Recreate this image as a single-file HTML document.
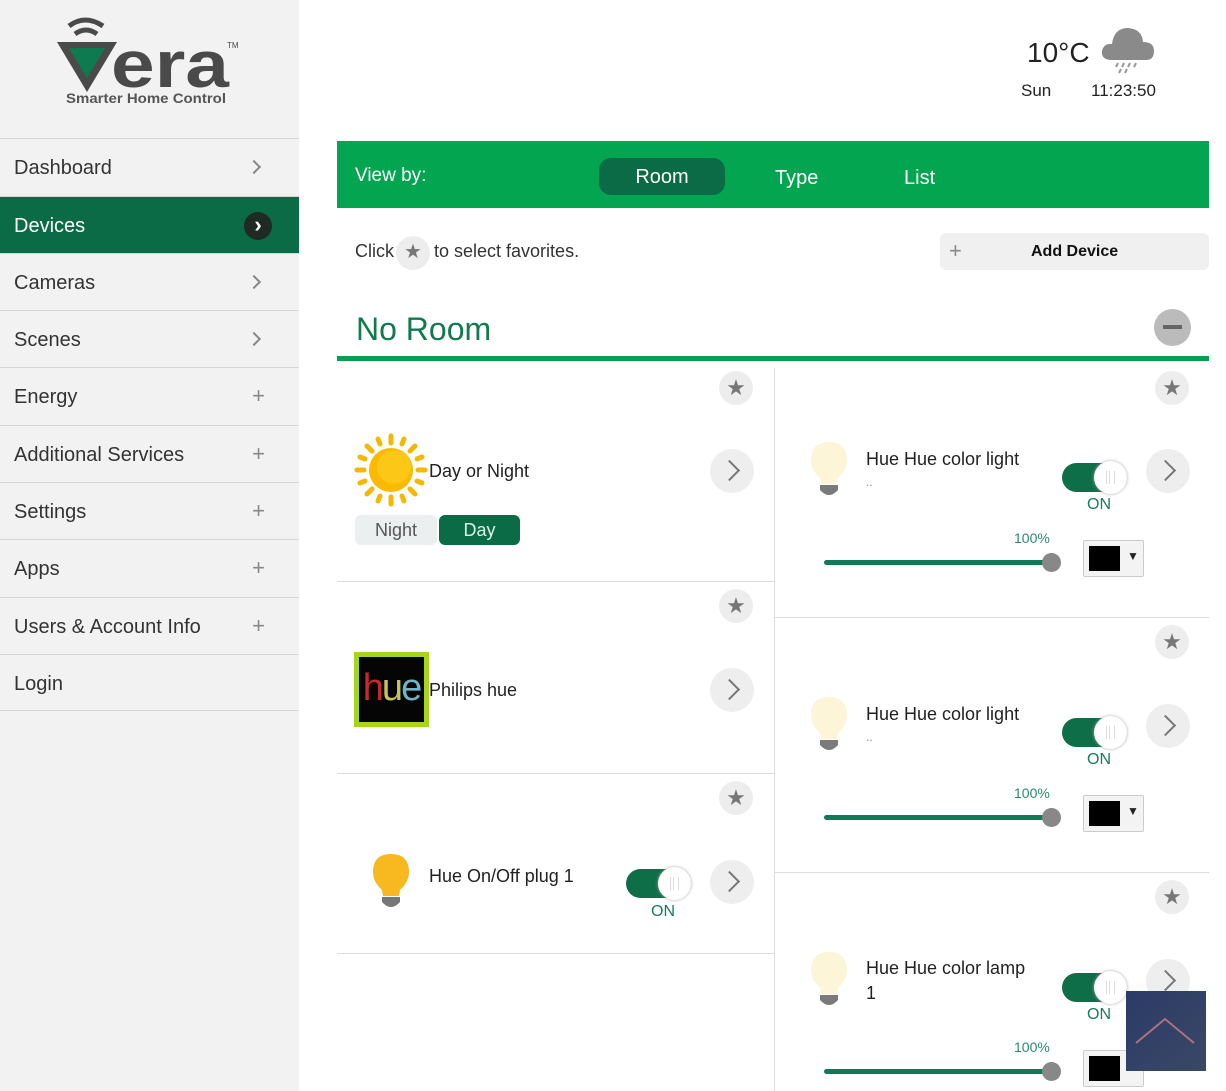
<!DOCTYPE html>
<html><head><meta charset="utf-8"><style>
*{box-sizing:border-box;margin:0;padding:0}
body{width:1226px;height:1091px;overflow:hidden;background:#fff;font-family:"Liberation Sans",sans-serif;color:#222;position:relative}
.a{position:absolute}
#side{left:0;top:0;width:299px;height:1091px;background:#f2f2f2}
.nav{position:absolute;left:0;width:299px;height:57px;border-top:1px solid #d6d6d6;font-size:20px;color:#333;padding:18px 14px 0}
.nav .ic{position:absolute;right:34px;top:15px;color:#888;font-size:22px}
.nav .ch{position:absolute;right:40px;top:23px;width:10px;height:10px;border-top:2px solid #888;border-right:2px solid #888;transform:rotate(45deg)}
.sel{background:#0b6b46;color:#fff}
.star{position:absolute;width:34px;height:34px;border-radius:50%;background:#ededed;color:#777;font-size:22px;text-align:center;line-height:33px}
.arr{position:absolute;width:44px;height:44px;border-radius:50%;background:#eee}
.arr:after{content:"";position:absolute;left:12px;top:14px;width:13px;height:13px;border-top:2px solid #777;border-right:2px solid #777;transform:rotate(45deg)}
.tg{position:absolute;width:65px;height:29px;border-radius:15px;background:#0e6e47}
.tg:after{content:"";position:absolute;right:0;top:-2px;width:33px;height:33px;border-radius:50%;background:#fff;box-shadow:0 0 3px #aaa}
.tg:before{content:"";position:absolute;right:12px;top:8px;width:7px;height:13px;border-left:1px solid #ddd;border-right:1px solid #ddd;z-index:2;background:linear-gradient(90deg,transparent 2px,#ddd 2px,#ddd 3px,transparent 3px)}
.on{position:absolute;font-size:16px;color:#1a7a5c}
.sl{position:absolute;height:5px;width:228px;background:#0f7a55;border-radius:3px}
.sl:after{content:"";position:absolute;right:-9px;top:-7px;width:19px;height:19px;border-radius:50%;background:#888}
.pc{position:absolute;font-size:14px;color:#2a8a70}
.cs{position:absolute;width:61px;height:37px;border:1px solid #ccc;background:#f3f3f3;border-radius:2px}
.cs:before{content:"";position:absolute;left:5px;top:5px;width:31px;height:25px;background:#000}
.cs:after{content:"▼";position:absolute;left:43px;top:8px;font-size:12px;color:#222}
.t{position:absolute;font-size:18px;color:#222}
.hl{position:absolute;height:1px;background:#ddd}
</style></head><body>
<div id="side" class="a">
 <svg class="a" style="left:55px;top:12px" width="190" height="95" viewBox="0 0 190 95">
  <path d="M14 14 Q30 2 48 14" stroke="#4a4a4a" stroke-width="5" fill="none"/>
  <path d="M20 22 Q31 14 42 22" stroke="#4a4a4a" stroke-width="5" fill="none"/>
  <polygon points="2,30 62,30 32,80" fill="#4a4a4a"/>
  <polygon points="14,36 50,36 32,66" fill="#0e7a50"/>
  <text x="56" y="75" font-size="66" font-weight="bold" fill="#4a4a4a" font-family="Liberation Sans" textLength="118" lengthAdjust="spacingAndGlyphs">era</text>
  <text x="172" y="36" font-size="8" fill="#4a4a4a">TM</text>
  <text x="11" y="91" font-size="14" font-weight="bold" fill="#555" font-family="Liberation Sans" textLength="160" lengthAdjust="spacingAndGlyphs">Smarter Home Control</text>
 </svg>
 <div class="nav" style="top:138px">Dashboard<span class="ch"></span></div>
 <div class="nav sel" style="top:196px">Devices<span style="position:absolute;right:27px;top:15px;width:28px;height:28px;border-radius:50%;background:#1f2a25;color:#fff;text-align:center;line-height:26px;font-size:22px;font-weight:bold">›</span></div>
 <div class="nav" style="top:253px">Cameras<span class="ch"></span></div>
 <div class="nav" style="top:310px">Scenes<span class="ch"></span></div>
 <div class="nav" style="top:367px">Energy<span class="ic">+</span></div>
 <div class="nav" style="top:425px">Additional Services<span class="ic">+</span></div>
 <div class="nav" style="top:482px">Settings<span class="ic">+</span></div>
 <div class="nav" style="top:539px">Apps<span class="ic">+</span></div>
 <div class="nav" style="top:597px">Users &amp; Account Info<span class="ic">+</span></div>
 <div class="nav" style="top:654px;border-bottom:1px solid #d6d6d6">Login</div>
</div>

<div class="a" style="left:1027px;top:37px;font-size:28px;color:#222">10°C</div>
<svg class="a" style="left:1100px;top:26px" width="56" height="48" viewBox="0 0 56 48"><path d="M10 34 Q1 33 2 25 Q4 17 12 18 Q14 2 28 2 Q42 3 43 16 Q54 16 54 25 Q54 34 46 34 Z" fill="#8a8a8a"/><g stroke="#999" stroke-width="2"><line x1="18" y1="37" x2="16" y2="41"/><line x1="24" y1="37" x2="22" y2="41"/><line x1="30" y1="37" x2="28" y2="41"/><line x1="36" y1="37" x2="34" y2="41"/><line x1="21" y1="43" x2="19" y2="47"/><line x1="27" y1="43" x2="25" y2="47"/></g></svg>
<div class="a" style="left:1021px;top:81px;font-size:17px">Sun</div>
<div class="a" style="left:1091px;top:81px;font-size:17px">11:23:50</div>

<div class="a" style="left:337px;top:141px;width:872px;height:67px;background:#03a550"></div>
<div class="a" style="left:355px;top:165px;font-size:19px;color:#fff">View by:</div>
<div class="a" style="left:599px;top:158px;width:126px;height:37px;border-radius:12px;background:#0b6b46;color:#fff;font-size:20px;text-align:center;line-height:38px">Room</div>
<div class="a" style="left:775px;top:167px;font-size:20px;color:#fff">Type</div>
<div class="a" style="left:904px;top:167px;font-size:20px;color:#fff">List</div>

<div class="a" style="left:355px;top:241px;font-size:18px;color:#333">Click</div>
<div class="star" style="left:396px;top:236px;font-size:20px">★</div>
<div class="a" style="left:434px;top:241px;font-size:18px;color:#333">to select favorites.</div>
<div class="a" style="left:940px;top:233px;width:269px;height:37px;border-radius:6px;background:#f0f0f0"></div>
<div class="a" style="left:949px;top:238px;font-size:22px;color:#888">+</div>
<div class="a" style="left:1031px;top:243px;font-size:16px;font-weight:bold;color:#111">Add Device</div>

<div class="a" style="left:356px;top:311px;font-size:32px;color:#127a4e">No Room</div>
<div class="a" style="left:1154px;top:309px;width:37px;height:37px;border-radius:50%;background:#bbb"><div style="position:absolute;left:9px;top:16px;width:19px;height:4px;background:#666"></div></div>
<div class="a" style="left:337px;top:356px;width:872px;height:5px;background:#05a04f"></div>

<div class="a" style="left:774px;top:368px;width:1px;height:723px;background:#ddd"></div>
<div class="hl" style="left:337px;top:581px;width:437px"></div>
<div class="hl" style="left:337px;top:773px;width:437px"></div>
<div class="hl" style="left:337px;top:953px;width:437px"></div>
<div class="hl" style="left:775px;top:617px;width:434px"></div>
<div class="hl" style="left:775px;top:872px;width:434px"></div>

<div class="star" style="left:719px;top:371px">★</div>
<svg class="a" style="left:354px;top:433px" width="74" height="74" viewBox="0 0 74 74"><g stroke="#f5b800" stroke-width="5" stroke-linecap="round"><line x1="37" y1="3" x2="37" y2="10"/><line x1="37" y1="64" x2="37" y2="71"/><line x1="3" y1="37" x2="10" y2="37"/><line x1="64" y1="37" x2="71" y2="37"/><line x1="13" y1="13" x2="18" y2="18"/><line x1="56" y1="56" x2="61" y2="61"/><line x1="13" y1="61" x2="18" y2="56"/><line x1="56" y1="18" x2="61" y2="13"/><line x1="24" y1="6" x2="26" y2="11"/><line x1="50" y1="6" x2="48" y2="11"/><line x1="24" y1="68" x2="26" y2="63"/><line x1="50" y1="68" x2="48" y2="63"/><line x1="6" y1="24" x2="11" y2="26"/><line x1="6" y1="50" x2="11" y2="48"/><line x1="68" y1="24" x2="63" y2="26"/><line x1="68" y1="50" x2="63" y2="48"/></g><circle cx="37" cy="37" r="22" fill="#fbb900"/><circle cx="40" cy="34" r="17" fill="#fcc716"/></svg>
<div class="t" style="left:429px;top:461px">Day or Night</div>
<div class="arr" style="left:710px;top:449px"></div>
<div class="a" style="left:355px;top:515px;width:82px;height:30px;border-radius:6px;background:#eceff0;font-size:18px;color:#555;text-align:center;line-height:31px">Night</div>
<div class="a" style="left:439px;top:515px;width:81px;height:30px;border-radius:6px;background:#0b6b46;font-size:18px;color:#d9f5e8;text-align:center;line-height:31px">Day</div>

<div class="star" style="left:719px;top:589px">★</div>
<div class="a" style="left:354px;top:652px;width:75px;height:75px;background:#a7d51b;padding:5px"><div style="width:65px;height:65px;background:#050505;font-size:38px;line-height:62px;text-align:center;font-family:'Liberation Sans';letter-spacing:-2px"><span style="color:#c52a2a">h</span><span style="color:#c9c45a">u</span><span style="color:#6fb3c9">e</span></div></div>
<div class="t" style="left:429px;top:680px">Philips hue</div>
<div class="arr" style="left:710px;top:668px"></div>

<div class="star" style="left:719px;top:781px">★</div>
<svg class="a" style="left:370px;top:852px" width="42" height="58" viewBox="0 0 42 58"><path d="M21 2 Q39 2 39 20 Q39 30 30 38 L29 44 L13 44 L12 38 Q3 30 3 20 Q3 2 21 2Z" fill="#f8b820"/><path d="M12 45 H30 V50 Q21 60 12 50Z" fill="#777"/></svg>
<div class="t" style="left:429px;top:866px">Hue On/Off plug 1</div>
<div class="tg" style="left:626px;top:869px"></div>
<div class="on" style="left:651px;top:903px">ON</div>
<div class="arr" style="left:710px;top:860px"></div>

<div class="star" style="left:1155px;top:371px">★</div>
<svg class="a" style="left:808px;top:440px" width="42" height="62" viewBox="0 0 42 62"><path d="M21 2 Q39 2 39 20 Q39 30 30 38 L29 44 L13 44 L12 38 Q3 30 3 20 Q3 2 21 2Z" fill="#fdf5d8"/><path d="M12 45 H30 V50 Q21 60 12 50Z" fill="#7a7a7a"/></svg>
<div class="t" style="left:866px;top:449px">Hue Hue color light</div>
<div class="a" style="left:866px;top:475px;font-size:12px;color:#888">..</div>
<div class="tg" style="left:1062px;top:463px"></div>
<div class="on" style="left:1087px;top:496px">ON</div>
<div class="arr" style="left:1146px;top:449px"></div>
<div class="pc" style="left:1014px;top:530px">100%</div>
<div class="sl" style="left:824px;top:560px"></div>
<div class="cs" style="left:1083px;top:540px"></div>

<div class="star" style="left:1155px;top:625px">★</div>
<svg class="a" style="left:808px;top:695px" width="42" height="62" viewBox="0 0 42 62"><path d="M21 2 Q39 2 39 20 Q39 30 30 38 L29 44 L13 44 L12 38 Q3 30 3 20 Q3 2 21 2Z" fill="#fdf5d8"/><path d="M12 45 H30 V50 Q21 60 12 50Z" fill="#7a7a7a"/></svg>
<div class="t" style="left:866px;top:704px">Hue Hue color light</div>
<div class="a" style="left:866px;top:730px;font-size:12px;color:#888">..</div>
<div class="tg" style="left:1062px;top:718px"></div>
<div class="on" style="left:1087px;top:751px">ON</div>
<div class="arr" style="left:1146px;top:704px"></div>
<div class="pc" style="left:1014px;top:785px">100%</div>
<div class="sl" style="left:824px;top:815px"></div>
<div class="cs" style="left:1083px;top:795px"></div>

<div class="star" style="left:1155px;top:880px">★</div>
<svg class="a" style="left:808px;top:950px" width="42" height="62" viewBox="0 0 42 62"><path d="M21 2 Q39 2 39 20 Q39 30 30 38 L29 44 L13 44 L12 38 Q3 30 3 20 Q3 2 21 2Z" fill="#fdf5d8"/><path d="M12 45 H30 V50 Q21 60 12 50Z" fill="#7a7a7a"/></svg>
<div class="t" style="left:866px;top:958px">Hue Hue color lamp</div>
<div class="t" style="left:866px;top:983px">1</div>
<div class="tg" style="left:1062px;top:973px"></div>
<div class="on" style="left:1087px;top:1006px">ON</div>
<div class="arr" style="left:1146px;top:959px"></div>
<div class="pc" style="left:1014px;top:1039px">100%</div>
<div class="sl" style="left:824px;top:1069px"></div>
<div class="cs" style="left:1083px;top:1050px"></div>

<div class="a" style="left:1126px;top:991px;width:80px;height:80px;background:linear-gradient(135deg,#2a3b66,#3a4866)"><svg width="80" height="80"><polyline points="10,52 39,28 68,52" fill="none" stroke="#b07080" stroke-width="2"/></svg></div>
</body></html>
